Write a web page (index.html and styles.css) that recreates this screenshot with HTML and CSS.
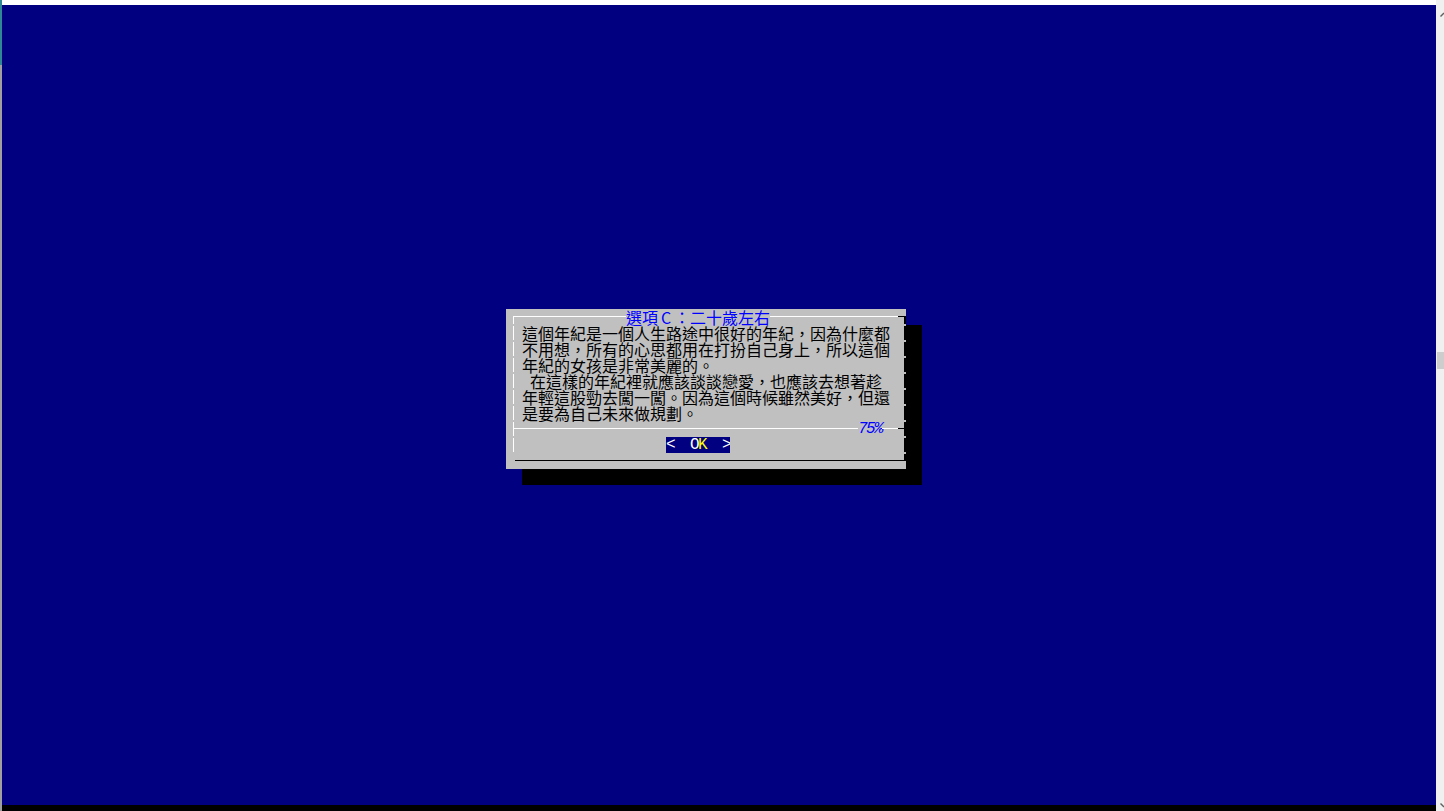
FILE: index.html
```html
<!DOCTYPE html>
<html lang="zh-Hant">
<head>
<meta charset="utf-8">
<title>選項C</title>
<link rel="stylesheet" href="styles.css">
</head>
<body>
<div class="window">
  <div class="edge-left"></div>
  <div class="center">
    <div class="topbar"></div>
    <div class="screen">
      <div class="dialog">
        <div class="frame">
          <div class="title">選項<span class="fw">C</span>：二十歲左右</div>
          <div class="text">
            <p>這個年紀是一個人生路途中很好的年紀，因為什麼都</p>
            <p>不用想，所有的心思都用在打扮自己身上，所以這個</p>
            <p>年紀的女孩是非常美麗的。</p>
            <p class="indent">在這樣的年紀裡就應該談談戀愛，也應該去想著趁</p>
            <p>年輕這股勁去闖一闖。因為這個時候雖然美好，但還</p>
            <p>是要為自己未來做規劃。</p>
          </div>
          <div class="sep">
            <span class="sep-line grow"></span>
            <span class="pct">75%</span>
            <span class="sep-line short"></span>
            <span class="sep-end"></span>
          </div>
          <div class="buttons">
            <span class="btn">&lt;  O<span class="hot">K</span>  &gt;</span>
          </div>
        </div>
      </div>
    </div>
    <div class="bottombar"></div>
  </div>
  <div class="scrollbar">
    <svg class="arrow-up" width="8" height="8" viewBox="0 0 8 8"><path d="M4.5 6.5 L8 3" stroke="#606060" stroke-width="1.4" fill="none"/></svg>
    <div class="thumb"></div>
    <svg class="arrow-down" width="8" height="8" viewBox="0 0 8 8"><path d="M4.5 1.5 L8 5" stroke="#606060" stroke-width="1.4" fill="none"/></svg>
  </div>
</div>
</body>
</html>
```

FILE: styles.css
```css
html, body {
  margin: 0;
  padding: 0;
  background: #ffffff;
  overflow: hidden;
}

.window {
  display: flex;
  width: 1444px;
  height: 811px;
}

.edge-left {
  width: 2px;
  flex: none;
  background: linear-gradient(to bottom, #2f8795 0, #2f8795 65px, #a0a0a0 65px);
}

.center {
  width: 1434px;
  flex: none;
  display: flex;
  flex-direction: column;
}

.topbar {
  height: 5px;
  background: #ffffff;
}

.screen {
  height: 800px;
  box-sizing: border-box;
  background: #000080;
  padding: 304px 0 0 504px;
}

.bottombar {
  height: 6px;
  background: #000000;
}

.scrollbar {
  width: 8px;
  flex: none;
  background: #f0f0f0;
  display: flex;
  flex-direction: column;
}

.arrow-up {
  display: block;
  margin-top: 10px;
}

.thumb {
  margin-top: 334px;
  margin-left: 1px;
  width: 7px;
  height: 17px;
  background: #cdcdcd;
}

.arrow-down {
  display: block;
  margin-top: auto;
  margin-bottom: 1px;
}

/* dialog */
.dialog {
  width: 400px;
  height: 160px;
  box-sizing: border-box;
  padding: 7px 0 8px 7px;
  background: #c0c0c0;
  box-shadow: 16px 16px 0 #000000;
  font-family: "Noto Sans CJK TC", "Noto Sans CJK SC", sans-serif;
  font-size: 16px;
  line-height: 16px;
  color: #000000;
}

.frame {
  height: 145px;
  box-sizing: border-box;
  padding: 1px 0 8px 0;
  background-image:
    linear-gradient(to right, #ffffff calc(100% - 8px), #000000 calc(100% - 8px)),
    linear-gradient(to right, transparent 2px, #000000 2px),
    repeating-linear-gradient(to bottom, #ffffff 0, #ffffff 8px, transparent 8px, transparent 10px, #ffffff 10px, #ffffff 16px),
    repeating-linear-gradient(to bottom, #000000 0, #000000 8px, transparent 8px, transparent 10px, #000000 10px, #000000 16px);
  background-size: 100% 1px, 100% 1px, 1px 137px, 2px 100%;
  background-position: 0 0, 0 100%, 0 0, 100% 0;
  background-repeat: no-repeat;
}

.title {
  margin-top: -8px;
  margin-left: 113px;
  width: 144px;
  height: 16px;
  background: #c0c0c0;
  color: #0000ff;
  white-space: nowrap;
}

.fw {
  display: inline-block;
  width: 16px;
  text-align: center;
}

.text {
  padding-left: 9px;
}

.text p {
  margin: 0;
  height: 16px;
  white-space: nowrap;
}

.text p.indent {
  padding-left: 8px;
}

.sep {
  display: flex;
  height: 16px;
  align-items: flex-start;
}

.sep-line {
  height: 1px;
  margin-top: 7px;
  background: #ffffff;
}

.sep-line.grow {
  flex: 1;
}

.sep-line.short {
  width: 16px;
  flex: none;
}

.sep-end {
  width: 8px;
  height: 1px;
  margin-top: 7px;
  background: #000000;
  flex: none;
}

.pct {
  width: 24px;
  flex: none;
  font-family: "Liberation Mono", monospace;
  font-size: 16px;
  letter-spacing: -1.6px;
  line-height: 16px;
  font-style: italic;
  color: #0000ff;
  white-space: pre;
}

.buttons {
  display: flex;
  height: 16px;
  padding-left: 153px;
}

.btn {
  display: block;
  width: 64px;
  height: 16px;
  background: #000080;
  color: #ffffff;
  font-family: "Liberation Mono", monospace;
  font-size: 16px;
  letter-spacing: -1.6px;
  line-height: 16px;
  white-space: pre;
  overflow: hidden;
}

.hot {
  color: #ffff00;
}
```
